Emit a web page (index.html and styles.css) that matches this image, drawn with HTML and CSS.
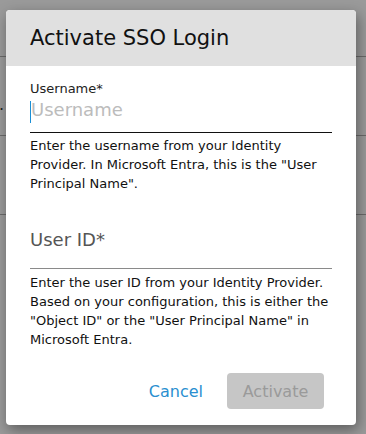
FILE: index.html
```html
<!DOCTYPE html>
<html>
  <head>
    <meta charset="UTF-8" />
    <title>Activate SSO Login</title>
    <link rel="stylesheet" href="styles.css">
  </head>
  <body>
    <!-- page behind the modal -->
    <div class="page">
      <div class="page-row"><span class="page-dot">.</span></div>
      <div class="page-row"></div>
      <div class="page-row"></div>
    </div>

    <div class="overlay">
      <div class="dialog">
        <div class="dialog-header">
          <h2>Activate SSO Login</h2>
        </div>

        <div class="dialog-body">
          <div class="field focused">
            <label class="field-label" for="username">Username*</label>
            <div class="field-input">
              <span class="caret"></span>
              <input id="username" type="text" placeholder="Username" />
            </div>
          </div>
          <p class="help">
            Enter the username from your Identity Provider. In Microsoft Entra,
            this is the "User Principal Name".
          </p>

          <div class="field empty">
            <div class="field-input">
              <label class="field-placeholder" for="userId">User ID*</label>
            </div>
          </div>
          <p class="help help-last">
            Enter the user ID from your Identity Provider. Based on your
            configuration, this is either the "Object ID" or the "User Principal
            Name" in Microsoft Entra.
          </p>
        </div>

        <div class="dialog-actions">
          <button class="btn btn-text">Cancel</button>
          <button class="btn btn-primary" disabled>Activate</button>
        </div>
      </div>
    </div>
  </body>
</html>
```

FILE: styles.css
```css
html, body {
  margin: 0;
  height: 100%;
}
body {
  font-family: "DejaVu Sans", Verdana, sans-serif;
  background: #9a9a9a;
  overflow: hidden;
  position: relative;
}
.page {
  padding-top: 56px;
}
.page-row {
  height: 78px;
  border-top: 1px solid #6a6a6a;
  position: relative;
}
.page-dot {
  position: absolute;
  left: -1px;
  top: 38px;
  font-size: 16px;
  line-height: 20px;
  color: #222;
}
.overlay {
  position: absolute;
  inset: 0;
  padding: 10px 10px 0 6px;
}
.dialog {
  width: 350px;
  height: 415px;
  background: #fff;
  border-radius: 4px;
  overflow: hidden;
  box-shadow: 2px 5px 14px rgba(0, 0, 0, 0.4);
  display: flex;
  flex-direction: column;
}
.dialog-header {
  background: #e0e0e0;
  height: 56px;
  padding: 0 24px;
  display: flex;
  align-items: center;
}
.dialog-header h2 {
  margin: 0;
  font-size: 21px;
  font-weight: normal;
  color: #111;
}
.dialog-body {
  padding: 15px 24px 0;
  flex-grow: 1;
}
.field-label {
  display: block;
  font-size: 13px;
  color: #222;
  line-height: 16px;
}
.field-input {
  position: relative;
  height: 33px;
  border-bottom: 1px solid #111;
}
.field-input input {
  display: block;
  border: 0;
  outline: none;
  padding: 0 0 0 1px;
  margin: 2px 0 0;
  height: 22px;
  line-height: 22px;
  width: 100%;
  font-family: inherit;
  font-size: 18px;
  background: transparent;
}
.field-input input::placeholder {
  color: #bcbcbc;
}
.caret {
  position: absolute;
  left: 0;
  top: 2px;
  width: 1px;
  height: 22px;
  background: #1a8fd6;
}
.empty .field-input {
  height: 39px;
  padding-top: 36px;
  border-bottom-color: #8a8a8a;
}
.field-placeholder {
  display: block;
  font-size: 18px;
  line-height: 22px;
  color: #555;
}
.help {
  margin: 4px 0 0;
  font-size: 13px;
  line-height: 18.75px;
  color: #111;
}
.help-last {
  margin-top: 5px;
}
.dialog-actions {
  display: flex;
  justify-content: flex-end;
  align-items: center;
  gap: 24px;
  padding: 0 32px 16px 0;
}
.btn {
  font-family: inherit;
  font-size: 16px;
  border: 0;
  border-radius: 4px;
  height: 36px;
  background: transparent;
}
.btn-text {
  color: #2a8fd0;
  padding: 0;
}
.btn-primary {
  background: #c6c6c6;
  color: #9a9a9a;
  width: 97px;
}
```
